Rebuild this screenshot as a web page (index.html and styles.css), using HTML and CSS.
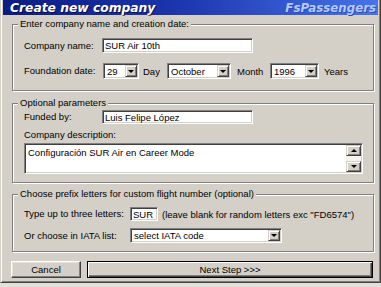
FILE: index.html
```html
<!DOCTYPE html>
<html lang="en">
<head>
    <meta charset="UTF-8">
    <title>Create new company</title>
    <link rel="stylesheet" href="styles.css">
</head>
<body>
    <div class="window">
        <div class="titlebar">
            <span class="title">Create new company</span>
            <span class="brand">FsPassengers</span>
        </div>
        <div class="content">
            <div class="group group-date">
                <div class="group-title">Enter company name and creation date:</div>
                <div class="row row-name">
                    <span class="label">Company name:</span>
                    <input class="field field-name" type="text" value="SUR Air 10th">
                </div>
                <div class="row row-date">
                    <span class="label">Foundation date:</span>
                    <div class="combo combo-day"><span class="combo-value">29</span><span class="combo-btn"></span></div>
                    <span class="unit unit-day">Day</span>
                    <div class="combo combo-month"><span class="combo-value">October</span><span class="combo-btn"></span></div>
                    <span class="unit unit-month">Month</span>
                    <div class="combo combo-year"><span class="combo-value">1996</span><span class="combo-btn"></span></div>
                    <span class="unit unit-year">Years</span>
                </div>
            </div>

            <div class="group group-opt">
                <div class="group-title">Optional parameters</div>
                <div class="row row-funded">
                    <span class="label">Funded by:</span>
                    <input class="field field-funded" type="text" value="Luis Felipe López">
                </div>
                <div class="desc-label">Company description:</div>
                <div class="memo">
                    <div class="memo-text">Configuración SUR Air en Career Mode</div>
                    <div class="memo-scroll">
                        <span class="scroll-btn scroll-up"></span>
                        <span class="scroll-track"></span>
                        <span class="scroll-btn scroll-down"></span>
                    </div>
                </div>
            </div>

            <div class="group group-prefix">
                <div class="group-title">Choose prefix letters for custom flight number (optional)</div>
                <div class="row row-letters">
                    <span class="label label-wide">Type up to three letters:</span>
                    <input class="field field-letters" type="text" value="SUR">
                    <span class="hint">(leave blank for random letters exc "FD6574")</span>
                </div>
                <div class="row row-iata">
                    <span class="label label-wide">Or choose in IATA list:</span>
                    <div class="combo combo-iata"><span class="combo-value">select IATA code</span><span class="combo-btn"></span></div>
                </div>
            </div>

            <div class="actions">
                <button class="btn btn-cancel">Cancel</button>
                <button class="btn btn-next">Next Step &gt;&gt;&gt;</button>
            </div>
        </div>
    </div>
</body>
</html>
```

FILE: styles.css
```css
* {
    box-sizing: border-box;
}

body {
    margin: 0;
    background: #e2e0da;
    font-family: "Liberation Sans", Arial, sans-serif;
    font-size: 9.5px;
    color: #000;
}

.window {
    width: 381px;
    height: 283px;
    background: #d4d0c8;
    border: 1px solid #404040;
    border-top: none;
    border-left-color: #d4d0c8;
    box-shadow: inset 1px 0 0 #fff, inset -1px -1px 0 #808080;
    padding: 0 2px;
}

/* title bar */
.titlebar {
    display: flex;
    justify-content: space-between;
    align-items: center;
    height: 15px;
    padding: 0 2px 0 7px;
    background: linear-gradient(to right, #0b1c84, #1a34ac 45%, #4774ea);
}

.title {
    font: italic bold 12.3px "DejaVu Sans", sans-serif;
    color: #fff;
    text-shadow: 1px 1px 0 rgba(0, 0, 0, 0.6);
}

.brand {
    font: italic bold 11.8px "DejaVu Sans", sans-serif;
    color: #b4c9fb;
    text-shadow: 1px 1px 0 #2a4cc4;
}

.content {
    padding: 9px 4px 0 9px;
}

/* group boxes */
.group {
    border: 1px solid #808080;
    box-shadow: 1px 1px 0 #fff, inset 1px 1px 0 #fff;
    padding: 0 0 0 11px;
}

.group-title {
    width: max-content;
    height: 12px;
    line-height: 12px;
    margin: -7px 0 0 -6px;
    padding: 0 2px;
    background: #d4d0c8;
}

.group-date { height: 67px; }
.group-opt { height: 80px; margin-top: 12px; }
.group-prefix { height: 58px; margin-top: 11px; }

.row {
    display: flex;
    align-items: center;
}

.label {
    flex: none;
    width: 78px;
    line-height: 12px;
}

.label-wide {
    width: 106px;
}

.row-name { height: 15px; margin-top: 8px; }
.row-date { height: 16px; margin-top: 10px; }
.row-funded { height: 14px; margin-top: 1px; }
.row-letters { height: 14px; margin-top: 7px; }
.row-iata { height: 15px; margin-top: 7px; }

/* sunken controls */
.field, .combo, .memo {
    background: #fff;
    border: 1px solid;
    border-color: #808080 #fff #fff #808080;
    box-shadow: inset 1px 1px 0 #404040, inset -1px -1px 0 #d4d0c8;
}

.field {
    height: 100%;
    padding: 0 2px;
    font: inherit;
    color: #000;
    outline: none;
}

.field-name, .field-funded { width: 151px; }
.field-letters { width: 28px; }

.hint {
    margin-left: 4px;
    white-space: nowrap;
}

.combo {
    display: flex;
    align-items: center;
    height: 16px;
    padding: 1px;
}

.combo-value {
    flex: 1;
    padding-left: 2px;
    white-space: nowrap;
}

.combo-btn, .scroll-btn {
    display: flex;
    align-items: center;
    justify-content: center;
    flex: none;
    background: #d4d0c8;
    border: 1px solid;
    border-color: #d4d0c8 #404040 #404040 #d4d0c8;
    box-shadow: inset 1px 1px 0 #fff, inset -1px -1px 0 #808080;
}

.combo-btn {
    width: 12px;
    height: 100%;
}

.combo-btn::after, .scroll-down::after {
    content: "";
    border-left: 3px solid transparent;
    border-right: 3px solid transparent;
    border-top: 3px solid #000;
}

.scroll-up::after {
    content: "";
    border-left: 3px solid transparent;
    border-right: 3px solid transparent;
    border-bottom: 3px solid #000;
}

.combo-day { width: 36px; margin-left: 1px; }
.combo-month { width: 64px; }
.combo-year { width: 49px; }
.combo-iata { width: 152px; height: 15px; }

.unit-day { width: 24px; margin-left: 4px; }
.unit-month { width: 33px; margin-left: 6px; }
.unit-year { margin-left: 5px; }

/* description */
.desc-label {
    height: 12px;
    line-height: 12px;
    margin-top: 5px;
}

.memo {
    display: flex;
    width: 339px;
    height: 31px;
    margin-top: 2px;
    padding: 1px;
}

.memo-text {
    flex: 1;
    padding: 2px 2px 0;
    line-height: 12px;
}

.memo-scroll {
    display: flex;
    flex-direction: column;
    width: 15px;
}

.scroll-btn {
    height: 11px;
}

.scroll-track {
    flex: 1;
    background: #f4f3f0;
}

/* buttons */
.actions {
    display: flex;
    gap: 6px;
    margin: 9px 1px 0 -1px;
}

.btn {
    height: 17px;
    padding: 0;
    font: inherit;
    color: #000;
    background: #d4d0c8;
    border: 1px solid;
    border-color: #fff #404040 #404040 #fff;
    box-shadow: inset -1px -1px 0 #808080, inset 1px 1px 0 #e6e3dd;
}

.btn-cancel {
    width: 70px;
}

.btn-next {
    flex: 1;
    border-color: #000;
    box-shadow: inset 1px 1px 0 #fff, inset -1px -1px 0 #404040, inset -2px -2px 0 #808080;
}
```
